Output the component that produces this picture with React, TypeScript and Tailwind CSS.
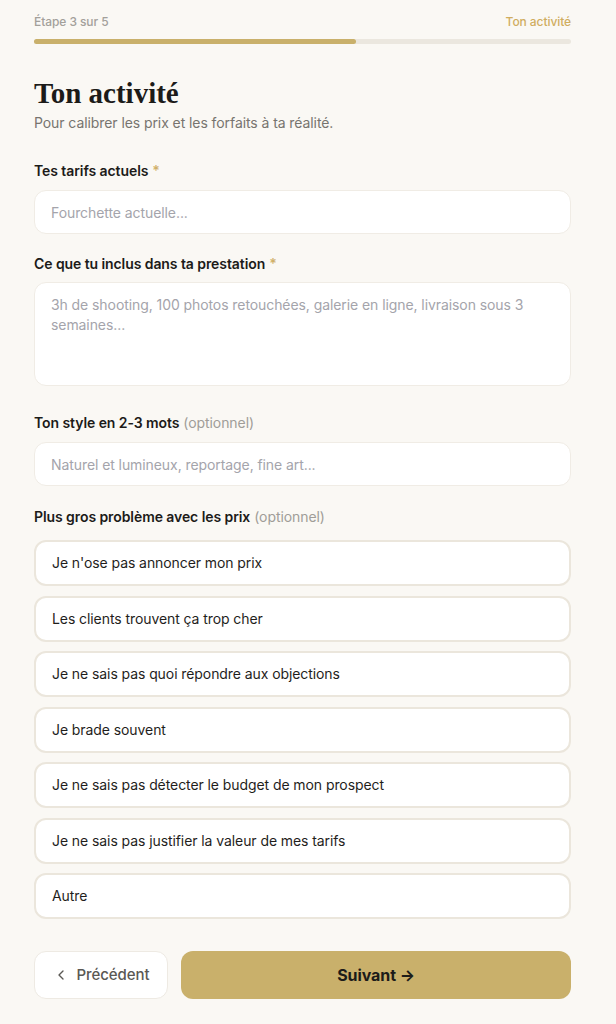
import React from 'react';
import { ChevronLeft } from 'lucide-react';

const problems = [
  "Je n'ose pas annoncer mon prix",
  'Les clients trouvent ça trop cher',
  'Je ne sais pas quoi répondre aux objections',
  'Je brade souvent',
  'Je ne sais pas détecter le budget de mon prospect',
  'Je ne sais pas justifier la valeur de mes tarifs',
  'Autre',
];

function Label({ text, required, optional }: { text: string; required?: boolean; optional?: boolean }) {
  return (
    <div className="text-sm leading-5 font-semibold text-[#1c1b19]">
      {text}
      {required && <span className="ml-1 text-[#d0b06a]">*</span>}
      {optional && <span className="ml-1 font-normal text-[#a09d98]">(optionnel)</span>}
    </div>
  );
}

export default function App() {
  return (
    <div className="min-h-screen bg-[#faf8f4] pt-[14px] pr-[45px] pb-[25px] pl-[34px] font-['Inter',sans-serif] tracking-[-0.005em] text-[#1c1b19]">
      {/* Step header */}
      <div className="flex items-center justify-between text-xs leading-4 font-medium">
        <span className="text-[#a3a09b]">Étape 3 sur 5</span>
        <span className="text-[#d0ad5f]">Ton activité</span>
      </div>
      <div className="mt-[9px] h-[5px] rounded-full bg-[#ebe7df]">
        <div className="h-full w-[60%] rounded-full bg-[#c9b06b]" />
      </div>

      {/* Title */}
      <h1 className="mt-[33px] font-['Liberation_Serif',serif] text-[29px] leading-8 font-bold tracking-normal text-[#1c1b19]">
        Ton activité
      </h1>
      <p className="mt-1 text-sm leading-5 text-[#77746f]">Pour calibrer les prix et les forfaits à ta réalité.</p>

      {/* Fields */}
      <div className="mt-[28px]">
        <Label text="Tes tarifs actuels" required />
        <input
          className="mt-[9px] block h-[44px] w-full rounded-xl border border-[#f0ece5] bg-white px-4 text-sm outline-none placeholder:text-[#a4a4ab]"
          placeholder="Fourchette actuelle..."
        />
      </div>

      <div className="mt-5">
        <Label text="Ce que tu inclus dans ta prestation" required />
        <textarea
          className="mt-2 block h-[104px] w-full resize-none rounded-xl border border-[#f0ece5] bg-white px-4 py-[12px] text-sm leading-5 outline-none placeholder:text-[#a4a4ab]"
          placeholder="3h de shooting, 100 photos retouchées, galerie en ligne, livraison sous 3 semaines..."
        />
      </div>

      <div className="mt-[27px]">
        <Label text="Ton style en 2-3 mots" optional />
        <input
          className="mt-[9px] block h-[44px] w-full rounded-xl border border-[#f0ece5] bg-white px-4 text-sm outline-none placeholder:text-[#a4a4ab]"
          placeholder="Naturel et lumineux, reportage, fine art..."
        />
      </div>

      <div className="mt-[21px]">
        <Label text="Plus gros problème avec les prix" optional />
        <div className="mt-[13px] flex flex-col gap-[9.5px]">
          {problems.map((p) => (
            <button
              key={p}
              className="flex h-[46px] w-full items-center rounded-xl border-2 border-[#ebe6dc] bg-white px-4 text-left text-sm text-[#1f1e1c]"
            >
              {p}
            </button>
          ))}
        </div>
      </div>

      {/* Actions */}
      <div className="mt-8 flex gap-[13px]">
        <button className="flex h-12 w-[134px] items-center justify-center gap-2 rounded-xl border border-[#eeeae3] bg-white text-[15px] font-medium text-[#5a5854]">
          <ChevronLeft className="h-4 w-4" strokeWidth={2} />
          <span>Précédent</span>
        </button>
        <button className="flex h-12 flex-1 items-center justify-center rounded-xl bg-[#c9b06b] text-base font-bold text-[#1c1b19]">
          Suivant →
        </button>
      </div>
    </div>
  );
}
